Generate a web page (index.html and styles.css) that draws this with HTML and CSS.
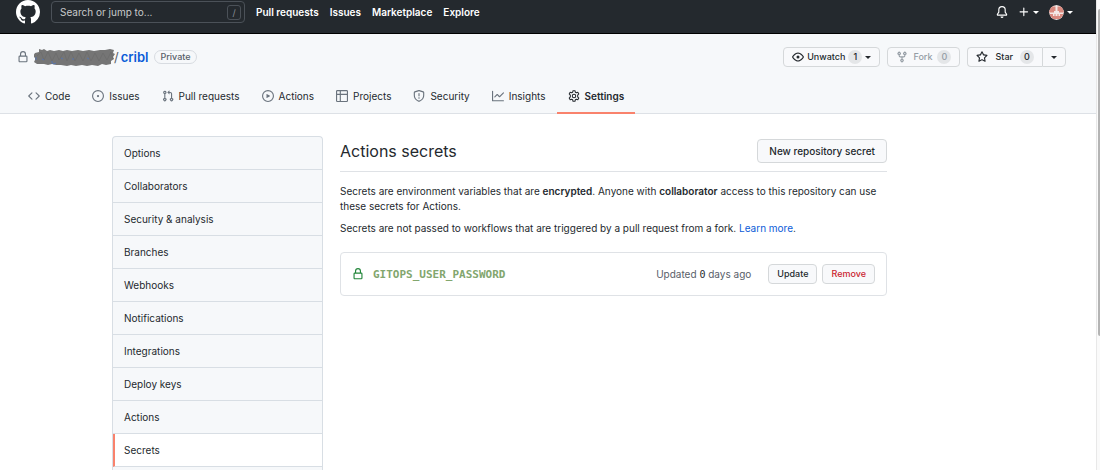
FILE: index.html
```
<!DOCTYPE html>
<html lang="en">
<head>
    <meta charset="UTF-8">
    <meta name="viewport" content="width=device-width, initial-scale=1.0">
    <title>Actions secrets</title>
    <link rel="stylesheet" href="styles.css">
</head>
<body>

    <div class="page">
        <!-- Top bar -->
        <header class="header">
            <a href="#" class="logo" aria-label="Homepage">
                <svg width="24" height="24" viewBox="0 0 16 16"><path d="M8 0C3.58 0 0 3.58 0 8c0 3.54 2.29 6.53 5.47 7.59.4.07.55-.17.55-.38 0-.19-.01-.82-.01-1.49-2.01.37-2.53-.49-2.69-.94-.09-.23-.48-.94-.82-1.13-.28-.15-.68-.52-.01-.53.63-.01 1.08.58 1.23.82.72 1.21 1.87.87 2.33.66.07-.52.28-.87.51-1.07-1.78-.2-3.64-.89-3.64-3.95 0-.87.31-1.59.82-2.15-.08-.2-.36-1.02.08-2.12 0 0 .67-.21 2.2.82.64-.18 1.32-.27 2-.27.68 0 1.36.09 2 .27 1.53-1.04 2.2-.82 2.2-.82.44 1.1.16 1.92.08 2.12.51.56.82 1.27.82 2.15 0 3.07-1.87 3.75-3.65 3.95.29.25.54.73.54 1.48 0 1.07-.01 1.93-.01 2.2 0 .21.15.46.55.38A8.013 8.013 0 0016 8c0-4.42-3.58-8-8-8z"/></svg>
            </a>
            <div class="search">
                <input type="text" placeholder="Search or jump to..." aria-label="Search or jump to">
                <span class="slash">/</span>
            </div>
            <nav class="header-nav">
                <a href="#">Pull requests</a>
                <a href="#">Issues</a>
                <a href="#">Marketplace</a>
                <a href="#">Explore</a>
            </nav>
            <div class="header-actions">
                <button class="icon-btn" aria-label="Notifications">
                    <svg width="12" height="12" viewBox="0 0 16 16"><path d="M8 16a2 2 0 001.985-1.75c.017-.137-.097-.25-.235-.25h-3.5c-.138 0-.252.113-.235.25A2 2 0 008 16z"/><path fill-rule="evenodd" d="M8 1.5A3.5 3.5 0 004.5 5v2.947c0 .346-.102.683-.294.97l-1.703 2.556a.018.018 0 00-.003.01l.001.006c0 .002.002.004.004.006a.017.017 0 00.006.004l.007.001h10.964l.007-.001a.016.016 0 00.006-.004.016.016 0 00.004-.006l.001-.007a.017.017 0 00-.003-.01l-1.703-2.554a1.75 1.75 0 01-.294-.97V5A3.5 3.5 0 008 1.5zM3 5a5 5 0 0110 0v2.947c0 .05.015.098.042.139l1.703 2.555A1.518 1.518 0 0113.482 13H2.518a1.518 1.518 0 01-1.263-2.36l1.703-2.554A.25.25 0 003 7.947V5z"/></svg>
                </button>
                <button class="icon-btn" aria-label="Create new">
                    <svg width="12" height="12" viewBox="0 0 16 16"><path d="M7.75 2a.75.75 0 01.75.75V7h4.25a.75.75 0 010 1.5H8.5v4.25a.75.75 0 01-1.5 0V8.5H2.75a.75.75 0 010-1.5H7V2.75A.75.75 0 017.75 2z"/></svg>
                    <span class="caret"></span>
                </button>
                <button class="icon-btn user" aria-label="User menu">
                    <svg class="avatar" width="15" height="15" viewBox="0 0 15 15"><circle cx="7.5" cy="7.5" r="7.5" fill="#f3e8e6"/><path fill="#d9897f" d="M3 1.500h3.500V6H5v1.500H0C.2 5 1.200 3 3 1.500zM8.500 1.500H12C13.800 3 14.800 5 15 7.500h-5V6H8.500zM.5 9H4v2h1.500V9h1v2h2V9h1v2H11V9h3.500c-.6 2.200-2.200 4-4 5h-6C2.600 13 1.100 11.200.5 9z"/></svg>
                    <span class="caret"></span>
                </button>
            </div>
        </header>

        <!-- Repository header -->
        <div class="repo-head">
            <div class="repo-title-row">
                <h1 class="repo-title">
                    <svg class="muted" width="12" height="12" viewBox="0 0 16 16"><path fill-rule="evenodd" d="M4 4v2h-.25A1.750 1.750 0 002 7.750v5.500c0 .966.784 1.750 1.750 1.750h8.500A1.750 1.750 0 0014 13.250v-5.500A1.750 1.750 0 0012.250 6H12V4a4 4 0 10-8 0zm6.500 2V4a2.500 2.500 0 10-5 0v2h5zM12 7.500h.25a.25.25 0 01.25.25v5.500a.25.25 0 01-.25.25h-8.500a.25.25 0 01-.25-.25v-5.500a.25.25 0 01.25-.25H12z"/></svg>
                    <svg class="scribble" width="82" height="18" viewBox="0 0 82 18">
                        <path fill="#757575" d="M1 5l4-1 0-3 3 1 2-1 3 2 3-1 4 1 5-1 4 1 4-1 5 1 6-1 5 1 6-1 5 1 6-1 5 0 5-1 4 1-1 3 2 1-2 3 1 2-3 2 0 3-5 1-4-1-4 2-6-1-5 1-5-1-6 1-5-1-4 1-6-1-5 0-4-1-4 1-4-1-4 0-3 0-3-2 1-2 0-2-2-2z"/>
                        <path fill="none" stroke="#6e6e6e" d="M3 8l4-4 3 8 4-8 4 9 4-8 3 7 5-8 3 9 4-9 4 9 4-8 4 8 4-9 4 9 4-8 4 8 4-8 4 7 4-8 2 7"/>
                        <path fill="none" stroke="#5674ae" d="M2 9v3M8 11l2 1M18 13v2l2 1 2-1M27 10l2 1M38 11h2M53 10l2 1"/>
                    </svg>
                    <span class="sep">/</span>
                    <a href="#">cribl</a>
                    <span class="label">Private</span>
                </h1>
                <div class="repo-actions">
                    <button class="btn btn-sm btn-watch">
                        <svg width="12" height="12" viewBox="0 0 16 16"><path fill-rule="evenodd" d="M1.679 7.932c.412-.621 1.242-1.750 2.366-2.717C5.175 4.242 6.527 3.500 8 3.500c1.473 0 2.824.742 3.955 1.715 1.124.967 1.954 2.096 2.366 2.717a.119.119 0 010 .136c-.412.621-1.242 1.750-2.366 2.717C10.825 11.758 9.473 12.500 8 12.500c-1.473 0-2.824-.742-3.955-1.715C2.920 9.818 2.090 8.690 1.679 8.068a.119.119 0 010-.136zM8 2c-1.981 0-3.670.992-4.933 2.078C1.797 5.169.88 6.423.43 7.100a1.619 1.619 0 000 1.798c.45.678 1.367 1.932 2.637 3.024C4.329 13.008 6.019 14 8 14c1.981 0 3.670-.992 4.933-2.078 1.270-1.091 2.187-2.345 2.637-3.023a1.619 1.619 0 000-1.798c-.45-.678-1.367-1.932-2.637-3.023C11.671 2.992 9.981 2 8 2zm0 8a2 2 0 100-4 2 2 0 000 4z"/></svg>
                        Unwatch <span class="counter">1</span> <span class="caret"></span>
                    </button>
                    <button class="btn btn-sm btn-fork" disabled>
                        <svg width="12" height="12" viewBox="0 0 16 16"><path fill-rule="evenodd" d="M5 3.250a.75.75 0 11-1.500 0 .75.75 0 011.500 0zm0 2.122a2.250 2.250 0 10-1.500 0v.878A2.250 2.250 0 005.750 8.500h1.500v2.128a2.251 2.251 0 101.500 0V8.500h1.500a2.250 2.250 0 002.250-2.250v-.878a2.250 2.250 0 10-1.500 0v.878a.75.75 0 01-.75.75h-4.500A.75.75 0 015 6.250v-.878zm3.750 7.378a.75.75 0 11-1.500 0 .75.75 0 011.500 0zm3-8.750a.75.75 0 100-1.500.75.75 0 000 1.500z"/></svg>
                        Fork <span class="counter">0</span>
                    </button>
                    <div class="btn-group">
                        <button class="btn btn-sm btn-star">
                            <svg width="12" height="12" viewBox="0 0 16 16"><path fill-rule="evenodd" d="M8 .25a.75.75 0 01.673.418l1.882 3.815 4.210.612a.75.75 0 01.416 1.279l-3.046 2.970.719 4.192a.75.75 0 01-1.088.791L8 12.347l-3.766 1.980a.75.75 0 01-1.088-.79l.72-4.194L.818 6.374a.75.75 0 01.416-1.280l4.210-.611L7.327.668A.75.75 0 018 .25zm0 2.445L6.615 5.500a.75.75 0 01-.564.410l-3.097.450 2.240 2.184a.75.75 0 01.216.664l-.528 3.084 2.769-1.456a.75.75 0 01.698 0l2.770 1.456-.53-3.084a.75.75 0 01.216-.664l2.240-2.183-3.096-.450a.75.75 0 01-.564-.410L8 2.694z"/></svg>
                            Star <span class="counter">0</span>
                        </button>
                        <button class="btn btn-sm" aria-label="Add to list"><span class="caret"></span></button>
                    </div>
                </div>
            </div>

            <nav class="tabs">
                <a href="#"><svg width="12" height="12" viewBox="0 0 16 16"><path fill-rule="evenodd" d="M4.720 3.220a.75.75 0 011.060 1.060L2.060 8l3.720 3.720a.75.75 0 11-1.060 1.060L.470 8.530a.75.75 0 010-1.060l4.250-4.250zm6.560 0a.75.75 0 10-1.060 1.060L13.940 8l-3.720 3.720a.75.75 0 101.060 1.060l4.250-4.250a.75.75 0 000-1.060l-4.250-4.250z"/></svg>Code</a>
                <a href="#"><svg width="12" height="12" viewBox="0 0 16 16"><path d="M8 9.500a1.500 1.500 0 100-3 1.500 1.500 0 000 3z"/><path fill-rule="evenodd" d="M8 0a8 8 0 100 16A8 8 0 008 0zM1.500 8a6.500 6.500 0 1113 0 6.500 6.500 0 01-13 0z"/></svg>Issues</a>
                <a href="#"><svg width="12" height="12" viewBox="0 0 16 16"><path fill-rule="evenodd" d="M7.177 3.073L9.573.677A.25.25 0 0110 .854v4.792a.25.25 0 01-.427.177L7.177 3.427a.25.25 0 010-.354zM3.750 2.500a.75.75 0 100 1.500.75.75 0 000-1.500zm-2.250.75a2.250 2.250 0 113 2.122v5.256a2.251 2.251 0 11-1.500 0V5.372A2.250 2.250 0 011.500 3.250zM11 2.500h-1V4h1a1 1 0 011 1v5.628a2.251 2.251 0 101.500 0V5A2.500 2.500 0 0011 2.500zm1 10.250a.75.75 0 111.500 0 .75.75 0 01-1.500 0zM3.750 12a.75.75 0 100 1.500.75.75 0 000-1.500z"/></svg>Pull requests</a>
                <a href="#"><svg width="12" height="12" viewBox="0 0 16 16"><path fill-rule="evenodd" d="M1.500 8a6.500 6.500 0 1113 0 6.500 6.500 0 01-13 0zM8 0a8 8 0 100 16A8 8 0 008 0zM6.379 5.227A.25.25 0 006 5.442v5.117a.25.25 0 00.379.214l4.264-2.559a.25.25 0 000-.428L6.379 5.227z"/></svg>Actions</a>
                <a href="#"><svg width="12" height="12" viewBox="0 0 16 16"><path fill-rule="evenodd" d="M0 1.750C0 .784.784 0 1.750 0h12.500C15.216 0 16 .784 16 1.750v12.500A1.750 1.750 0 0114.250 16H1.750A1.750 1.750 0 010 14.250V1.750zM1.500 6.500v7.750c0 .138.112.25.25.25H5v-8H1.500zM5 5H1.500V1.750a.25.25 0 01.25-.25H5V5zm1.500 1.500v8h7.750a.25.25 0 00.25-.25V6.500h-8zm8-1.500h-8V1.500h7.750a.25.25 0 01.25.25V5z"/></svg>Projects</a>
                <a href="#"><svg width="12" height="12" viewBox="0 0 16 16"><path fill-rule="evenodd" d="M7.467.133a1.750 1.750 0 011.066 0l5.250 1.680A1.750 1.750 0 0115 3.480V7c0 1.566-.320 3.182-1.303 4.682-.983 1.498-2.585 2.813-5.032 3.855a1.700 1.700 0 01-1.330 0c-2.447-1.042-4.049-2.357-5.032-3.855C1.320 10.182 1 8.566 1 7V3.480a1.750 1.750 0 011.217-1.667l5.250-1.680zm.61 1.429a.25.25 0 00-.153 0l-5.250 1.680a.25.25 0 00-.174.238V7c0 1.358.275 2.666 1.057 3.860.784 1.194 2.121 2.340 4.366 3.297a.2.2 0 00.154 0c2.245-.956 3.582-2.104 4.366-3.298C13.225 9.666 13.500 8.360 13.500 7V3.480a.25.25 0 00-.174-.237l-5.250-1.680zM9 10.500a1 1 0 11-2 0 1 1 0 012 0zm-.25-5.750a.75.75 0 10-1.500 0v3a.75.75 0 001.500 0v-3z"/></svg>Security</a>
                <a href="#"><svg width="12" height="12" viewBox="0 0 16 16"><path fill-rule="evenodd" d="M1.500 1.750a.75.75 0 00-1.500 0v12.500c0 .414.336.75.75.75h14.500a.75.75 0 000-1.500H1.500V1.750zm14.280 2.530a.75.75 0 00-1.060-1.060L10 7.940 7.530 5.470a.75.75 0 00-1.060 0L3.220 8.720a.75.75 0 001.060 1.060L7 7.060l2.470 2.470a.75.75 0 001.060 0l5.250-5.250z"/></svg>Insights</a>
                <a href="#" class="selected"><svg class="gear" width="12" height="12" viewBox="0 0 16 16"><circle cx="8" cy="8" r="2.300"/><path d="M6.700.9h2.600l.5 2 1.300.7 2-.6 1.300 2.200-1.500 1.500v2.600l1.500 1.500-1.300 2.200-2-.6-1.300.7-.5 2H6.700l-.5-2-1.300-.7-2 .6-1.300-2.200 1.500-1.500V6.700L1.600 5.200 2.900 3l2 .6 1.300-.7z"/></svg>Settings</a>
            </nav>
        </div>

        <!-- Settings -->
        <div class="container">
            <nav class="menu">
                <a href="#">Options</a>
                <a href="#">Collaborators</a>
                <a href="#">Security &amp; analysis</a>
                <a href="#">Branches</a>
                <a href="#">Webhooks</a>
                <a href="#">Notifications</a>
                <a href="#">Integrations</a>
                <a href="#">Deploy keys</a>
                <a href="#">Actions</a>
                <a href="#" class="selected">Secrets</a>
            </nav>

            <main class="content">
                <div class="subhead">
                    <h2>Actions secrets</h2>
                    <button class="btn">New repository secret</button>
                </div>
                <p>Secrets are environment variables that are <strong>encrypted</strong>. Anyone with <strong>collaborator</strong> access to this repository can use these secrets for Actions.</p>
                <p>Secrets are not passed to workflows that are triggered by a pull request from a fork. <a href="#">Learn more</a>.</p>

                <div class="secret">
                    <svg width="12" height="12" viewBox="0 0 16 16"><path fill-rule="evenodd" d="M4 4v2h-.25A1.750 1.750 0 002 7.750v5.500c0 .966.784 1.750 1.750 1.750h8.500A1.750 1.750 0 0014 13.250v-5.500A1.750 1.750 0 0012.250 6H12V4a4 4 0 10-8 0zm6.500 2V4a2.500 2.500 0 10-5 0v2h5zM12 7.500h.25a.25.25 0 01.25.25v5.500a.25.25 0 01-.25.25h-8.500a.25.25 0 01-.25-.25v-5.500a.25.25 0 01.25-.25H12z"/></svg>
                    <code>GITOPS_USER_PASSWORD</code>
                    <span class="updated">Updated <span class="days">0</span> days ago</span>
                    <button class="btn btn-sm">Update</button>
                    <button class="btn btn-sm btn-danger">Remove</button>
                </div>
            </main>
        </div>
    </div>

    <div class="scrollbar"><div class="thumb"></div></div>

</body>
</html>
```
FILE: styles.css
```
* {
    box-sizing: border-box;
}
body {
    display: flex;
    height: 100vh;
    margin: 0;
    overflow: hidden;
    font-family: Inter, "Liberation Sans", sans-serif;
    font-size: 10px;
    line-height: 15px;
    color: #24292e;
    background-color: #fff;
}
a {
    color: #0b5cd8;
    text-decoration: none;
}
button, input {
    font-family: inherit;
    font-size: inherit;
    color: inherit;
}
svg {
    flex: none;
    fill: currentColor;
}
strong {
    font-weight: 600;
}
.page {
    display: flex;
    flex: 1;
    flex-direction: column;
    min-width: 0;
}

/* Top bar */
.header {
    display: flex;
    flex: none;
    align-items: center;
    padding: 0 23px 9px 16px;
    color: #fff;
    background-color: #24292e;
    border-bottom: 1px solid #000;
}
.header a {
    color: #fff;
}
.logo {
    display: flex;
}
.search {
    display: flex;
    align-items: center;
    width: 194px;
    height: 22px;
    margin: 1px 11px;
    padding: 0 3px 0 8px;
    border: 1px solid #4b5158;
    border-radius: 4px;
}
.search input {
    flex: 1;
    min-width: 0;
    padding: 0;
    border: 0;
    outline: 0;
    background: none;
}
.search input::placeholder {
    color: #c8c9cb;
    opacity: 1;
}
.slash {
    width: 14px;
    height: 15px;
    font-size: 9px;
    line-height: 13px;
    text-align: center;
    color: #8b9096;
    border: 1px solid #4b5158;
    border-radius: 3px;
}
.header-nav {
    display: flex;
    gap: 11px;
    font-weight: 600;
}
.header-actions {
    display: flex;
    align-items: center;
    gap: 10px;
    margin-left: auto;
}
.icon-btn {
    display: flex;
    align-items: center;
    gap: 3px;
    padding: 0;
    border: 0;
    background: none;
}
.avatar {
    border-radius: 50%;
}
.caret {
    border: 3px solid transparent;
    border-top-color: currentColor;
    border-bottom: 0;
}

/* Repository header */
.repo-head {
    flex: none;
    padding-top: 13px;
    background-color: #f6f8fa;
    border-bottom: 1px solid #dde1e6;
}
.repo-title-row {
    display: flex;
    align-items: center;
    justify-content: space-between;
    padding: 0 30px 0 17px;
}
.repo-title {
    display: flex;
    align-items: center;
    margin: 0;
    font-size: 13px;
    font-weight: 600;
    line-height: 20px;
}
.repo-title .scribble {
    margin-left: 5px;
}
.muted {
    color: #6a737d;
}
.sep {
    margin: 0 2px 0 -2px;
    font-weight: 400;
    color: #586069;
}
.label {
    margin-left: 6px;
    padding: 0 5px;
    font-size: 9px;
    font-weight: 500;
    line-height: 12px;
    color: #586069;
    border: 1px solid #d8dce1;
    border-radius: 8px;
}
.repo-actions {
    display: flex;
    gap: 7px;
}
.btn {
    display: flex;
    align-items: center;
    justify-content: center;
    padding: 3px 11px;
    font-weight: 500;
    line-height: 16px;
    color: #24292e;
    background-color: #f8f9fb;
    border: 1px solid #d5d8da;
    border-radius: 4px;
}
.btn-sm {
    gap: 4px;
    padding: 1px 8px;
    font-size: 9px;
}
.btn-watch {
    gap: 3px;
}
.btn-fork {
    gap: 5px;
    color: #959da5;
}
.btn-star {
    gap: 7px;
}
.btn-danger {
    color: #cb2431;
}
.counter {
    min-width: 14px;
    height: 14px;
    padding: 0 4px;
    line-height: 14px;
    text-align: center;
    background-color: #e4e6e8;
    border-radius: 7px;
}
.btn-group {
    display: flex;
}
.btn-group .btn:first-child {
    border-right: 0;
    border-radius: 4px 0 0 4px;
}
.btn-group .btn:last-child {
    border-radius: 0 4px 4px 0;
}
.tabs {
    display: flex;
    margin: 13px 0 -1px;
    padding: 0 17px;
}
.tabs a {
    display: flex;
    align-items: center;
    gap: 5px;
    height: 34px;
    padding: 0 11px;
    color: #24292e;
    border-bottom: 2px solid transparent;
}
.tabs svg {
    color: #6a737d;
}
.tabs .selected {
    font-weight: 600;
    border-bottom-color: #f9826c;
}
.tabs .gear {
    color: #24292e;
    fill: none;
    stroke: currentColor;
    stroke-width: 1.4;
    stroke-linejoin: round;
}

/* Settings */
.container {
    display: grid;
    flex: 1;
    grid-template-columns: 211px 1fr;
    gap: 17px;
    width: 100%;
    max-width: 887px;
    padding: 22px 0 0 112px;
}
.menu {
    background-color: #f6f8fa;
    border: 1px solid #d8dee4;
    border-bottom: 0;
    border-radius: 4px 4px 0 0;
}
.menu a {
    display: block;
    padding: 9px 11px 8px;
    color: #24292e;
    border-bottom: 1px solid #d8dee4;
}
.menu .selected {
    padding-left: 9px;
    background-color: #fff;
    border-left: 2px solid #f9826c;
}
.subhead {
    display: flex;
    align-items: center;
    justify-content: space-between;
    margin: 3px 0 12px;
    padding-bottom: 8px;
    border-bottom: 1px solid #dfe2e6;
}
.subhead h2 {
    margin: 0;
    font-size: 16px;
    font-weight: 400;
}
.content p {
    margin: 0 0 7px;
}
.secret {
    display: flex;
    align-items: center;
    gap: 5px;
    margin-top: 16px;
    padding: 11px;
    border: 1px solid #dfe2e6;
    border-radius: 4px;
}
.secret svg {
    color: #22863a;
}
.secret code {
    margin-left: 4px;
    font-family: "DejaVu Sans Mono", monospace;
    font-size: 11px;
    font-weight: 700;
    color: #82a66e;
}
.updated {
    margin: 0 12px 0 auto;
    color: #586069;
}
.days {
    font-family: "DejaVu Sans Mono", monospace;
    color: #24292e;
}

.scrollbar {
    flex: none;
    width: 4px;
    padding-top: 9px;
    background-color: #fafafa;
    border-left: 1px solid #e8e8e8;
}
.thumb {
    width: 2px;
    height: 71%;
    margin-left: auto;
    background-color: #b4b4b4;
    border-radius: 2px 0 0 2px;
}
```
